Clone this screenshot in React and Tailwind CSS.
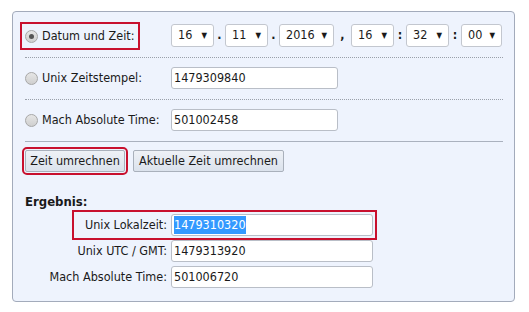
const font = { fontFamily: '"DejaVu Sans Condensed", "DejaVu Sans", Verdana, sans-serif' };

function Radio({ checked }) {
  return (
    <span className="flex h-[13px] w-[13px] shrink-0 items-center justify-center rounded-full border border-[#a7a7a7] bg-gradient-to-b from-[#e6e6e6] to-[#cfcfcf]">
      {checked && <span className="h-[5px] w-[5px] rounded-full bg-[#555]" />}
    </span>
  );
}

function Select({ value, w }) {
  return (
    <div className={`flex h-[23px] shrink-0 items-center justify-between rounded-[3px] border border-[#c3c7cf] bg-white pl-[6px] pr-[6px] ${w}`}>
      <span>{value}</span>
      <span className="text-[8px] leading-none">▼</span>
    </div>
  );
}

function Field({ children, w = "w-[167px]" }) {
  return (
    <div className={`flex h-[22px] items-center rounded-[3px] border border-[#b9bec7] bg-white px-[2px] ${w}`}>
      {children}
    </div>
  );
}

function Sep({ c, w }) {
  return <span className={`shrink-0 text-center font-bold ${w}`}>{c}</span>;
}

export default function App() {
  return (
    <div className="h-[312px] w-[529px] bg-white pl-[12px] pt-[11px] text-[12.5px] text-[#1a1a1a]" style={font}>
      <div className="h-[291px] w-[503px] rounded-[4px] border border-[#a3abbb] bg-[#eef3fd] pl-[12px] pr-[11px] pt-[12px]">
        <div className="flex items-center">
          <div className="w-[146px] shrink-0">
            <label className="inline-flex items-center gap-[4px] outline-2 outline-offset-[3px] outline-[#c8102e]">
              <Radio checked />
              <span>Datum und Zeit:</span>
            </label>
          </div>
          <div className="flex items-center">
            <Select value="16" w="w-[43px]" />
            <Sep c="." w="w-[11px]" />
            <Select value="11" w="w-[43px]" />
            <Sep c="." w="w-[11px]" />
            <Select value="2016" w="w-[55px]" />
            <Sep c="," w="w-[17px]" />
            <Select value="16" w="w-[43px]" />
            <Sep c=":" w="w-[12px]" />
            <Select value="32" w="w-[43px]" />
            <Sep c=":" w="w-[12px]" />
            <Select value="00" w="w-[41px]" />
          </div>
        </div>
        <div className="mt-[10px] border-t border-dotted border-[#9aa0aa]" />
        <div className="mt-[9px] flex items-center">
          <div className="flex w-[146px] items-center gap-[4px]">
            <Radio />
            <span>Unix Zeitstempel:</span>
          </div>
          <Field>1479309840</Field>
        </div>
        <div className="mt-[10px] border-t border-dotted border-[#9aa0aa]" />
        <div className="mt-[9px] flex items-center">
          <div className="flex w-[146px] items-center gap-[4px]">
            <Radio />
            <span>Mach Absolute Time:</span>
          </div>
          <Field>501002458</Field>
        </div>
        <div className="mt-[10px] border-t border-[#aab1be]" />
        <div className="mt-[8px] flex items-center gap-[8px]">
          <button className="h-[22px] w-[100px] rounded-[2px] border border-[#a9b0bb] bg-gradient-to-b from-[#eef1f6] to-[#dbe2ec] outline-2 outline-offset-[1px] outline-[#c8102e]">
            Zeit umrechnen
          </button>
          <button className="h-[22px] w-[151px] rounded-[2px] border border-[#a9b0bb] bg-gradient-to-b from-[#eef1f6] to-[#dbe2ec]">
            Aktuelle Zeit umrechnen
          </button>
        </div>
        <div className="mt-[22px] text-[13px] font-bold leading-[16px]">Ergebnis:</div>
        <div className="mt-[4px] flex flex-col gap-[4px]">
          <div className="ml-[51px] flex items-center gap-[4px] self-start outline-2 outline-offset-[2px] outline-[#c8102e]">
            <span className="w-[91px] text-right">Unix Lokalzeit:</span>
            <Field w="w-[202px]">
              <span className="bg-[#3399ff] text-white">1479310320</span>
            </Field>
          </div>
          <div className="flex items-center gap-[4px]">
            <span className="w-[142px] text-right">Unix UTC / GMT:</span>
            <Field w="w-[202px]">1479313920</Field>
          </div>
          <div className="flex items-center gap-[4px]">
            <span className="w-[142px] text-right">Mach Absolute Time:</span>
            <Field w="w-[202px]">501006720</Field>
          </div>
        </div>
      </div>
    </div>
  );
}
